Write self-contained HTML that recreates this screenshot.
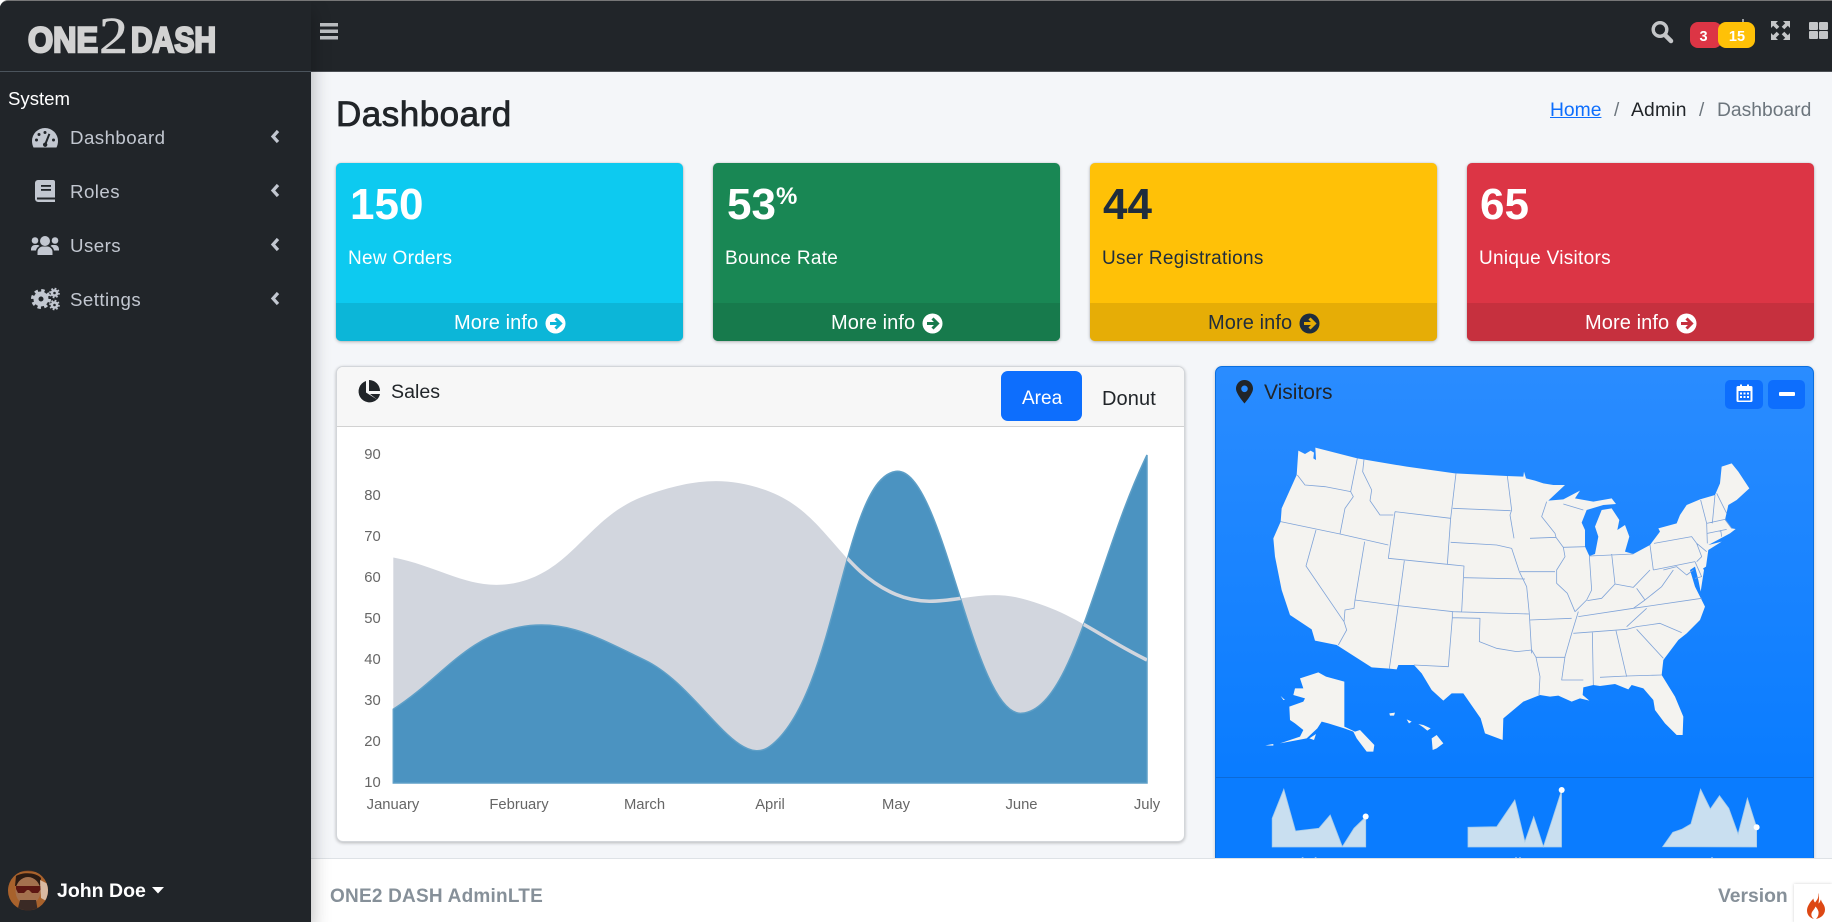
<!DOCTYPE html>
<html lang="en"><head><meta charset="utf-8"><title>Dashboard</title>
<style>
html,body{margin:0;padding:0;width:1832px;height:922px;overflow:hidden;background:#fff;font-family:"Liberation Sans",Arial,sans-serif}
#root{position:absolute;left:0;top:0;width:1832px;height:922px;overflow:hidden;background:#f4f6f9;border-top-left-radius:8px;border-top:1px solid #777;box-sizing:border-box}
.a{position:absolute}
.t{position:absolute;white-space:nowrap;line-height:1}
.card{position:absolute;top:162px;width:347px;height:178px;border-radius:5px;box-shadow:0 0 1px rgba(0,0,0,.2),0 1px 3px rgba(0,0,0,.25);overflow:hidden}
.card .foot{position:absolute;left:0;right:0;top:140px;height:38px}
.num{position:absolute;font-size:44px;font-weight:bold;line-height:1;top:20px;white-space:nowrap}
.lab{position:absolute;font-size:19px;line-height:1;top:86px;left:12px;letter-spacing:.3px;white-space:nowrap}
.mor{position:absolute;font-size:20px;line-height:1;top:150px;left:118px;letter-spacing:.1px;white-space:nowrap}
.card svg{position:absolute;left:209px;top:150px}
.nav{color:#c2c7d0;font-size:18.7px;letter-spacing:.45px;left:70px}
svg{display:block}
</style></head><body>
<div id="root">
<!-- top bar -->
<div class="a" style="left:0;top:0;width:1832px;height:70px;background:#212529;border-bottom:1px solid #4b4f54"></div>
<!-- content title -->
<div class="t" style="left:336px;top:96px;font-size:35px;color:#212529;-webkit-text-stroke:.8px #212529;letter-spacing:.5px">Dashboard</div>
<div class="t" style="left:1550px;top:100px;font-size:19.3px;color:#0d6efd;text-decoration:underline">Home</div>
<div class="t" style="left:1614px;top:100px;font-size:19px;color:#6c757d">/</div>
<div class="t" style="left:1631px;top:100px;font-size:19.3px;color:#212529;letter-spacing:.2px">Admin</div>
<div class="t" style="left:1699px;top:100px;font-size:19px;color:#6c757d">/</div>
<div class="t" style="left:1717px;top:100px;font-size:19.3px;color:#6c757d">Dashboard</div>

<!-- small boxes -->
<div class="card" style="left:336px;background:#0dcaf0;color:#fff"><div class="foot" style="background:#0cb6d8"></div>
<div class="num" style="left:14px">150</div><div class="lab">New Orders</div><div class="mor">More info</div>
<svg width="21" height="21" viewBox="0 0 21 21"><circle cx="10.5" cy="10.5" r="10" fill="#fff"/><path d="M5 10.5H15M10.5 5.5L15.5 10.5L10.5 15.5" fill="none" stroke="#0cb6d8" stroke-width="3"/></svg></div>
<div class="card" style="left:713px;background:#198754;color:#fff"><div class="foot" style="background:#177a4c"></div>
<div class="num" style="left:14px">53<span style="font-size:24px;vertical-align:15px">%</span></div><div class="lab">Bounce Rate</div><div class="mor">More info</div>
<svg width="21" height="21" viewBox="0 0 21 21"><circle cx="10.5" cy="10.5" r="10" fill="#fff"/><path d="M5 10.5H15M10.5 5.5L15.5 10.5L10.5 15.5" fill="none" stroke="#177a4c" stroke-width="3"/></svg></div>
<div class="card" style="left:1090px;background:#ffc107;color:#1f2d3d"><div class="foot" style="background:#e6ad06"></div>
<div class="num" style="left:13px">44</div><div class="lab">User Registrations</div><div class="mor">More info</div>
<svg width="21" height="21" viewBox="0 0 21 21"><circle cx="10.5" cy="10.5" r="10" fill="#1f2d3d"/><path d="M5 10.5H15M10.5 5.5L15.5 10.5L10.5 15.5" fill="none" stroke="#e6ad06" stroke-width="3"/></svg></div>
<div class="card" style="left:1467px;background:#dc3545;color:#fff"><div class="foot" style="background:#c6303e"></div>
<div class="num" style="left:13px">65</div><div class="lab">Unique Visitors</div><div class="mor">More info</div>
<svg width="21" height="21" viewBox="0 0 21 21"><circle cx="10.5" cy="10.5" r="10" fill="#fff"/><path d="M5 10.5H15M10.5 5.5L15.5 10.5L10.5 15.5" fill="none" stroke="#c6303e" stroke-width="3"/></svg></div>

<!-- sales card -->
<div class="a" style="left:336px;top:365px;width:849px;height:476px;box-sizing:border-box;background:#fff;border:1px solid #d3d6da;border-radius:7px;box-shadow:0 1px 3px rgba(0,0,0,.25);overflow:hidden">
<div class="a" style="left:0;top:0;right:0;height:59px;background:#f7f7f7;border-bottom:1px solid #d2d2d2"></div></div>
<div class="a" style="left:1001px;top:370px;width:81px;height:50px;border-radius:7px;background:#0d6efd"></div>
<div class="t" style="left:1022px;top:388px;font-size:19px;color:#fff">Area</div>
<div class="t" style="left:1102px;top:388px;font-size:20px;color:#212529;letter-spacing:.1px">Donut</div>
<div class="t" style="left:391px;top:382px;font-size:19.6px;color:#212529">Sales</div>

<!-- visitors card -->
<div class="a" style="left:1215px;top:365px;width:599px;height:540px;box-sizing:border-box;border:1px solid #0b6fdf;border-radius:7px;background:linear-gradient(#2a8cff,#0a7cff 75%);box-shadow:0 1px 3px rgba(0,0,0,.2)">
<div class="a" style="left:0;right:0;top:410px;height:1px;background:#0b6ad8"></div></div>
<div class="t" style="left:1264px;top:381px;font-size:21px;color:#212529">Visitors</div>
<div class="a" style="left:1725px;top:379px;width:38px;height:29px;background:#0d6efd;border-radius:5px"></div>
<div class="a" style="left:1768px;top:379px;width:37px;height:29px;background:#0d6efd;border-radius:5px"></div>
<div class="t" style="left:1289px;top:855px;font-size:18px;color:#fff">Visitors</div>
<div class="t" style="left:1490px;top:855px;font-size:18px;color:#fff">Online</div>
<div class="t" style="left:1688px;top:855px;font-size:18px;color:#fff">Sales</div>

<!-- footer -->
<div class="a" style="left:311px;top:857px;width:1521px;height:65px;background:#fff;border-top:1px solid #dee2e6"></div>
<div class="t" style="left:330px;top:886px;font-size:19px;font-weight:bold;color:#869099;letter-spacing:.22px">ONE2 DASH AdminLTE</div>
<div class="t" style="left:1718px;top:886px;font-size:19.3px;font-weight:bold;color:#869099">Version</div>
<div class="a" style="left:1794px;top:883px;width:38px;height:39px;background:#fff;box-shadow:0 0 3px rgba(0,0,0,.18)"></div>

<!-- sidebar -->
<div class="a" style="left:0;top:0;width:311px;height:922px;background:#212529;box-shadow:0 10px 18px rgba(0,0,0,.3)"></div>
<div class="a" style="left:0;top:70px;width:311px;height:1px;background:#4b545c"></div>
<div class="t" style="left:8px;top:89px;font-size:18.6px;color:#fff">System</div>
<div class="t nav" style="top:128px">Dashboard</div>
<div class="t nav" style="top:182px">Roles</div>
<div class="t nav" style="top:236px">Users</div>
<div class="t nav" style="top:290px">Settings</div>
<div class="t" style="left:57px;top:881px;font-size:19.5px;font-weight:bold;color:#fff">John Doe</div>

<!-- all vector graphics, page coordinates (root has 1px top border) -->
<svg class="a" style="left:0;top:-1px" width="1832" height="922" viewBox="0 0 1832 922">
<defs>
<clipPath id="cb"><path d="M393.3 709.2C443.6 676.4 465.1 637.8 519 627.2C565.6 618.1 598.3 638.1 644.5 660C698.8 685.7 736.5 771.4 770.2 746.1C837 695.9 843 478.3 895.8 471.4C943.5 465.2 972.5 716.5 1021.5 713.3C1073 709.9 1096.8 558.3 1147 455L1147 783L393.3 783Z"/></clipPath>
<clipPath id="av"><circle cx="28" cy="890.5" r="20"/></clipPath>
</defs>
<!-- logo -->
<g fill="#d2d2d2" stroke="#d2d2d2" font-family="'Liberation Sans',sans-serif" font-weight="bold">
<text x="28" y="52" font-size="35" textLength="70" lengthAdjust="spacingAndGlyphs" stroke-width="2.4">ONE</text>
<text x="131" y="52" font-size="35" textLength="85" lengthAdjust="spacingAndGlyphs" stroke-width="2.4">DASH</text>
</g>
<text x="99" y="53" font-family="'Liberation Serif',serif" font-size="52" fill="#d2d2d2" stroke="#d2d2d2" stroke-width=".5" textLength="29" lengthAdjust="spacingAndGlyphs">2</text>
<!-- hamburger -->
<g fill="#b9bcbf"><rect x="320" y="23" width="18" height="3.500"/><rect x="320" y="29.500" width="18" height="3.500"/><rect x="320" y="36" width="18" height="3.500"/></g>
<!-- top right icons -->
<g fill="none" stroke="#c4c6c8"><circle cx="1660" cy="29.5" r="6.8" stroke-width="3.400"/><path d="M1665 35L1671 41" stroke-width="4.500" stroke-linecap="round"/></g>
<path d="M1743 19v4" stroke="#c4c6c8" stroke-width="1.5"/>
<rect x="1690" y="22" width="32" height="26" rx="8" fill="#dc3545"/>
<rect x="1718" y="22" width="37" height="26" rx="8" fill="#ffc107"/>
<text x="1703.5" y="41" font-size="14.5" font-weight="bold" fill="#fff" text-anchor="middle" font-family="'Liberation Sans',sans-serif">3</text>
<text x="1737" y="41" font-size="14.5" font-weight="bold" fill="#fff" text-anchor="middle" font-family="'Liberation Sans',sans-serif">15</text>
<g fill="#c4c6c8"><path d="M1771 21h7l-2.2 2.2 3.5 3.5 -2.6 2.6 -3.5-3.5L1771 28zM1790 21h-7l2.2 2.2-3.5 3.5 2.6 2.6 3.5-3.5 2.2 2.2zM1771 40h7l-2.2-2.2 3.5-3.5-2.6-2.6-3.5 3.5-2.2-2.2zM1790 40h-7l2.2-2.2-3.5-3.5 2.6-2.6 3.5 3.5 2.2-2.2z"/>
<rect x="1809" y="22" width="9" height="8" rx="1"/><rect x="1819" y="22" width="9" height="8" rx="1"/><rect x="1809" y="31" width="9" height="8" rx="1"/><rect x="1819" y="31" width="9" height="8" rx="1"/></g>
<!-- sidebar icons -->
<g fill="#c2c7d0">
<path d="M32 141a13 13 0 0 1 26 0c0 2.500-.6 4.500-1.500 6.500h-23c-.9-2-1.500-4-1.500-6.500z"/>
<g fill="#212529"><circle cx="36.500" cy="140" r="1.500"/><circle cx="39" cy="134.500" r="1.500"/><circle cx="45" cy="132.500" r="1.500"/><circle cx="53.500" cy="140" r="1.500"/><path d="M48.500 133.500l1.800.7-3.500 9a2.200 2.200 0 1 1-1.900-.7z"/></g>
<path d="M38 180h15a2 2 0 0 1 2 2v20H38a3.500 3.500 0 0 1-3-3v-16a3 3 0 0 1 3-3z"/>
<g fill="#212529"><rect x="41" y="185" width="10" height="1.800"/><rect x="41" y="189" width="10" height="1.800"/><rect x="37" y="197.500" width="18" height="2"/></g>
<circle cx="45" cy="241" r="5"/><circle cx="35" cy="240.500" r="3.300"/><circle cx="55" cy="240.500" r="3.300"/>
<path d="M37.500 255v-3c0-3.500 3-5.500 5-5.500h5c2 0 5 2 5 5.500v3zM31 249.500c0-3 2-4.500 4-4.500h2.500c.8 0 1.300.3 2 1-2 1-3.200 2.500-3.500 4.500h-5zM59 249.500c0-3-2-4.500-4-4.500h-2.500c-.8 0-1.300.3-2 1 2 1 3.200 2.500 3.500 4.500h5z"/>
</g>
<g fill="none" stroke="#c2c7d0">
<circle cx="41" cy="299" r="5" stroke-width="5"/><circle cx="41" cy="299" r="8.500" stroke-width="3" stroke-dasharray="3.400 3.270"/>
<circle cx="54.500" cy="293" r="2.600" stroke-width="2.600"/><circle cx="54.500" cy="293" r="4.500" stroke-width="1.600" stroke-dasharray="1.770 1.760"/>
<circle cx="54.500" cy="305" r="2.600" stroke-width="2.600"/><circle cx="54.500" cy="305" r="4.500" stroke-width="1.600" stroke-dasharray="1.770 1.760"/>
<path d="M278 131l-5 5.500 5 5.500M278 185l-5 5.500 5 5.500M278 239l-5 5.500 5 5.500M278 293l-5 5.500 5 5.500" stroke-width="3.200"/>
</g>
<!-- avatar -->
<g clip-path="url(#av)"><rect x="8" y="870" width="40" height="42" fill="#6e3a1e"/><path d="M8 878c5-8 30-10 40 0v32H8z" fill="#a8622c"/><path d="M16 876c6-4 20-4 25 2l-1 8H15z" fill="#2b1a12"/><ellipse cx="28" cy="891" rx="12.500" ry="14" fill="#a4714e"/><path d="M16 886h25v3l-3 4h-6l-3-3h-2l-3 3h-6l-2-4z" fill="#5d1712"/><path d="M20 900h16l2 12H17z" fill="#3a2a25"/><path d="M40 880l8 4v18l-7-4z" fill="#d9b9a1"/></g>
<path d="M152 887h12l-6 6.500z" fill="#fff"/>
<!-- sales header icons -->
<g fill="#212529"><path d="M366 381A11 11 0 1 0 377 399.500L366 392.500Z"/><path d="M369 380A11 11 0 0 1 380 391L369 391Z"/><path d="M380 394A11 11 0 0 1 377 399.500L370 394Z"/></g>
<!-- chart -->
<path d="M393.3 557.5C443.6 567.3 473 593.4 519 582.1C573.5 568.8 589.5 515.8 644.5 496C690 479.7 726.2 474.7 770.2 491.9C826.7 514 839.3 570.4 895.8 594.4C939.8 613.1 973.8 586 1021.5 598.5C1074.3 612.3 1096.8 635.4 1147 660L1147 783L393.3 783Z" fill="#d2d6de"/>
<path d="M393.3 709.2C443.6 676.4 465.1 637.8 519 627.2C565.6 618.1 598.3 638.1 644.5 660C698.8 685.7 736.5 771.4 770.2 746.1C837 695.9 843 478.3 895.8 471.4C943.5 465.2 972.5 716.5 1021.5 713.3C1073 709.9 1096.8 558.3 1147 455L1147 783L393.3 783Z" fill="#4b93c1" stroke="#5e9fc7" stroke-width="1.500"/>
<path d="M393.3 557.5C443.6 567.3 473 593.4 519 582.1C573.5 568.8 589.5 515.8 644.5 496C690 479.7 726.2 474.7 770.2 491.9C826.7 514 839.3 570.4 895.8 594.4C939.8 613.1 973.8 586 1021.5 598.5C1074.3 612.3 1096.8 635.4 1147 660" fill="none" stroke="#d2d6de" stroke-width="3.500" clip-path="url(#cb)"/>
<g font-family="'Liberation Sans',sans-serif" font-size="14.800" fill="#666">
<g text-anchor="middle"><text x="372.500" y="459">90</text><text x="372.500" y="500">80</text><text x="372.500" y="541">70</text><text x="372.500" y="582">60</text><text x="372.500" y="623">50</text><text x="372.500" y="664">40</text><text x="372.500" y="705">30</text><text x="372.500" y="746">20</text><text x="372.500" y="787">10</text>
<text x="393" y="809">January</text><text x="519" y="809">February</text><text x="644.500" y="809">March</text><text x="770" y="809">April</text><text x="896" y="809">May</text><text x="1021.500" y="809">June</text><text x="1147" y="809">July</text></g></g>
<!-- visitors header icons -->
<path fill-rule="evenodd" d="M1244.500 380c-5 0-8.500 4-8.500 8.800c0 5 8.500 14.700 8.500 14.700s8.500-9.700 8.500-14.700c0-4.800-3.500-8.800-8.500-8.800zM1244.500 385.500a3.300 3.300 0 1 1 0 6.600a3.300 3.300 0 0 1 0-6.600z" fill="#212529"/>
<g fill="#fff"><path fill-rule="evenodd" d="M1738 386h2v-1.500h2v1.500h5v-1.500h2v1.500h2a1.500 1.500 0 0 1 1.500 1.500v13a1.500 1.500 0 0 1-1.500 1.500h-13a1.500 1.500 0 0 1-1.500-1.500v-13a1.500 1.500 0 0 1 1.500-1.500zM1738.500 391v9.500h12v-9.500z"/>
<rect x="1740" y="392.500" width="2" height="2"/><rect x="1743.500" y="392.500" width="2" height="2"/><rect x="1747" y="392.500" width="2" height="2"/><rect x="1740" y="396" width="2" height="2"/><rect x="1743.500" y="396" width="2" height="2"/><rect x="1747" y="396" width="2" height="2"/>
<rect x="1779" y="392" width="16" height="4" rx="1"/></g>
<!-- US map -->
<g transform="translate(1240 430) scale(.33333)" stroke-linejoin="round">
<path fill="#f4f3f0" d="M175 62L195 72L212 62L222 68L220 85L228 90L226 53L352 85L500 110L645 130L800 138L850 140L852 125L858 145L885 152L910 160L940 165L975 165L925 212L970 208L995 195L1020 182L1005 205L1060 215L1115 205L1128 222L1090 225L1040 240L1025 278L1035 300L1035 350L1048 378L1065 372L1075 320L1065 290L1085 240L1115 235L1138 270L1132 300L1155 285L1168 320L1155 365L1180 372L1230 345L1260 305L1255 295L1310 280L1320 255L1340 225L1380 208L1425 195L1440 160L1445 110L1475 100L1495 125L1528 175L1490 210L1465 225L1455 270L1475 295L1487 297L1470 310L1405 345L1445 335L1405 360L1398 410L1385 418L1375 395L1392 420L1382 485L1375 450L1365 410L1350 420L1365 470L1395 530L1380 570L1340 610L1315 630L1270 690L1265 735L1305 800L1330 860L1328 915L1310 915L1275 880L1245 840L1240 810L1210 775L1175 765L1165 778L1125 762L1080 768L1060 765L1030 772L1028 795L1048 812L1020 805L995 815L955 797L930 800L900 795L850 815L790 865L788 930L735 910L722 865L670 790L635 790L610 812L575 780L545 730L522 705L475 705L470 718L448 716L395 712L290 645L225 632L215 598L150 555L125 480L105 380L100 325L122 275L125 235L170 135Z"/>
<path fill="#f4f3f0" d="M180 745L235 727L258 740L313 755L313 890L345 905L360 900L403 945L400 965L380 965L350 925L340 905L313 895L265 880L245 875L232 895L200 925L120 940L180 920L190 900L165 880L150 870L148 830L190 815L195 805L160 795L165 775L190 775ZM575 925L590 915L610 940L590 955L578 960ZM500 868L515 875L507 880ZM535 882L550 885L572 895L562 902L550 892ZM448 850L465 848L462 857L450 857ZM76 946L100 942L100 947ZM208 925L228 912L222 930ZM122 798L135 810L130 810Z"/>
<path fill="none" stroke="#7fa3d8" stroke-width="2.400" d="M172 135L195 165L255 170L332 185M352 85L332 185L340 200L315 235L300 312M122 275L300 312L445 345M228 300L198 408L312 575L320 600L295 645M374 335L345 510L342 535L315 540L312 575M345 510L475 527L640 545L868 552M372 88L368 125L395 180L390 212L420 255L460 255M465 245L632 265L622 403L445 385L465 245M493 392L475 527L448 716M622 403L672 408L665 545M648 130L632 265M638 235L812 242M802 138L815 240L810 255L822 325M632 337L770 345L815 355M672 443L855 447M815 355L838 425L860 470L868 552L875 670M637 545L637 563L625 710L522 705M637 563L720 565L718 635L770 655L830 665L875 660L888 682L900 740L897 795M870 325L948 322M840 425L945 425M920 215L905 260L945 310L948 322L970 352L975 380L950 420L950 460L982 490L1005 545M970 352L1035 350M970 222L1030 240M1048 378L1055 480L1040 510L1005 545M1115 372L1125 462M1048 378L1180 372M1042 512L1085 505L1125 462L1180 472L1230 420M1230 345L1240 420M1190 475L1215 510M1015 560L1180 535L1385 505M1180 535L1215 510M870 570L995 565M1220 535L1160 590M1000 610L1160 598L1190 590L1260 580L1325 608M1015 545L995 610L975 680L965 750L1030 750M888 682L975 682M1057 605L1060 765M1128 602L1160 740M1080 742L1160 738L1265 735M1190 598L1270 685M1215 510L1265 470L1300 420M1242 340L1355 320L1370 340M1240 420L1365 395M1370 340L1385 380L1370 395M1382 210L1400 280L1402 340M1370 340L1400 365M1425 195L1417 280M1430 190L1460 250M1400 280L1455 268L1475 295M1402 310L1460 298M1442 300L1445 320M1270 420L1310 410L1340 435L1360 420M1365 395L1385 440L1365 445"/>
</g>
<!-- sparklines (x=1200+X/2.481, y=760+Y/3) -->
<g fill="#c9dff0" stroke="#a8cdeb" stroke-width=".8">
<path d="M1272.200 847V818.300L1283.800 789.300L1295.500 831L1318.900 828.300L1330.200 815L1342.300 846.700L1354 828.300L1365.700 817V847Z"/>
<path d="M1468 847V827.300L1496.700 826.700L1514.800 800L1524.900 841.700L1533.700 816.700L1543.400 846.700L1552.700 818.300L1561.500 790.700V847Z"/>
<path d="M1662.700 846.700L1672.800 832.300L1681.700 829.300L1690.900 824L1700.600 789.300L1710.300 809L1719.500 795.700L1728.800 808.300L1738.100 834L1747.400 798.300L1756.600 827.300V847Z"/>
</g>
<g fill="#fff"><circle cx="1365.700" cy="816.500" r="3"/><circle cx="1561.700" cy="790" r="3"/><circle cx="1756.600" cy="827.300" r="3"/></g>
<!-- flame -->
<path fill="#dd4814" d="M1818 894c1 4-1 6-3 8.500c-1-1-1.500-2.500-1.500-4c-3.500 3.500-6.500 8-6.500 12c0 4.500 3 7.500 7 8.500c-2-1.500-3-3.500-2.500-5.500c.5-2.500 3-4 4-7c2 2.500 3.500 4.500 3 7.500c-.2 2-1.200 3.500-2.500 5c4.500-1 9-4 9-9.500c0-5-3.500-6.500-4-10c-1 1.500-1 3-2.500 4c.5-3.500 1-7-.5-10.500z"/>
</svg>
</div>
</body></html>
